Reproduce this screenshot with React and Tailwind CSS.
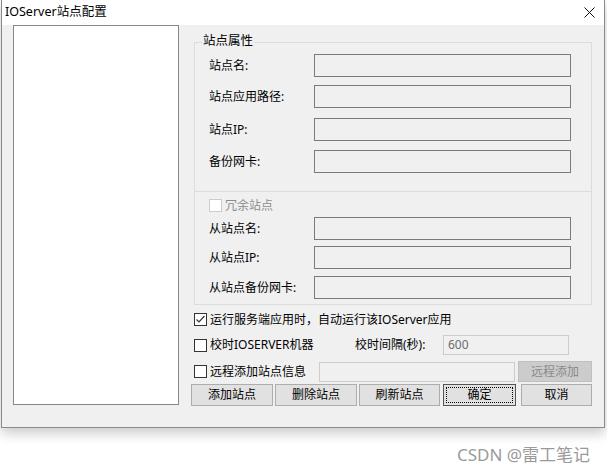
import React from "react";

const FONT = "font-['Noto_Sans','Noto_Sans_CJK_SC',sans-serif]";

function Input({ className = "" }) {
  return <div className={"h-[23px] border border-[#7a7a7a] bg-[#f0f0f0] " + className} />;
}

function Row({ label, className = "" }) {
  return (
    <div className={"flex items-center " + className}>
      <div className="w-[105px] leading-none">{label}</div>
      <Input className="w-[257px]" />
    </div>
  );
}

function Checkbox({ checked = false, disabled = false }) {
  return (
    <div
      className={
        "w-[13px] h-[13px] border bg-white flex items-center justify-center shrink-0 " +
        (disabled ? "border-[#cccccc]" : "border-[#333333]")
      }
    >
      {checked && (
        <svg width="11" height="11" viewBox="0 0 11 11">
          <polyline points="1.5,5.5 4,8 9.5,2" fill="none" stroke="#333" strokeWidth="1.2" />
        </svg>
      )}
    </div>
  );
}

function Btn({ children, className = "", focused = false }) {
  return (
    <div
      className={
        "h-[22px] bg-[#e1e1e1] border flex items-center justify-center relative " +
        (focused ? "border-[#555555] " : "border-[#adadad] ") +
        className
      }
    >
      {focused && <div className="absolute inset-[2px] border border-dotted border-black" />}
      <span className="leading-none">{children}</span>
    </div>
  );
}

export default function App() {
  return (
    <div className={"w-[607px] h-[473px] bg-white relative overflow-hidden text-[12px] text-black " + FONT}>
      <div className="ml-[1px] w-[604px] h-[428px] border-x border-b border-[#8a8a8a] flex flex-col shadow-[0_5px_12px_rgba(0,0,0,0.22)]">
        <div className="h-[25px] bg-white flex items-center justify-between pl-[3px] pr-[9px] shrink-0">
          <span className="text-[12.5px] leading-none">IOServer站点配置</span>
          <svg width="11" height="11" viewBox="0 0 11 11">
            <path d="M0.5 0.5 L10.5 10.5 M10.5 0.5 L0.5 10.5" stroke="#111" strokeWidth="1" />
          </svg>
        </div>
        <div className="flex-1 bg-[#f0f0f0] flex">
          <div className="ml-[11px] w-[166px] h-[380px] border border-[#828790] bg-white" />
          <div className="ml-[12px] w-[401px] flex flex-col">
            <div className="ml-[3px] mt-[17px] w-[398px] h-[263px] border border-[#dcdcdc] relative flex flex-col">
              <div className="absolute left-[7px] top-[-8px] bg-[#f0f0f0] px-[1px] leading-none text-[12.5px]">站点属性</div>
              <div className="pl-[14px] flex flex-col">
                <Row label="站点名:" className="mt-[11px]" />
                <Row label="站点应用路径:" className="mt-[8px]" />
                <Row label="站点IP:" className="mt-[10px]" />
                <Row label="备份网卡:" className="mt-[9px]" />
              </div>
              <div className="mt-[18px] border-t border-[#dcdcdc]" />
              <div className="pl-[14px] flex flex-col">
                <div className="mt-[6px] h-[15px] flex items-center gap-[3px] text-[#8d8d8d]">
                  <Checkbox disabled />
                  <span className="leading-none">冗余站点</span>
                </div>
                <Row label="从站点名:" className="mt-[4px]" />
                <Row label="从站点IP:" className="mt-[6px]" />
                <Row label="从站点备份网卡:" className="mt-[7px]" />
              </div>
            </div>
            <div className="ml-[3px] mt-[8px] h-[13px] flex items-center gap-[3px]">
              <Checkbox checked />
              <span className="leading-none">运行服务端应用时，自动运行该IOServer应用</span>
            </div>
            <div className="ml-[3px] mt-[9px] h-[20px] flex items-center">
              <Checkbox />
              <span className="ml-[3px] leading-none w-[145px]">校时IOSERVER机器</span>
              <span className="leading-none w-[88px]">校时间隔(秒):</span>
              <div className="w-[126px] h-[20px] border border-[#cccccc] bg-[#f0f0f0] flex items-center pl-[4px] text-[#6d6d6d] leading-none">600</div>
            </div>
            <div className="ml-[3px] mt-[6px] h-[21px] flex items-center">
              <Checkbox />
              <span className="ml-[3px] leading-none w-[109px]">远程添加站点信息</span>
              <div className="w-[197px] h-[20px] border border-[#cccccc] bg-[#f0f0f0]" />
              <div className="ml-[3px] w-[74px] h-[21px] bg-[#cccccc] border border-[#bfbfbf] flex items-center justify-center text-[#8a8a8a] leading-none">远程添加</div>
            </div>
            <div className="mt-[2px] flex">
              <Btn className="w-[82px]">添加站点</Btn>
              <Btn className="ml-[2px] w-[82px]">删除站点</Btn>
              <Btn className="ml-[2px] w-[81px]">刷新站点</Btn>
              <Btn className="ml-[3px] w-[73px]" focused>确定</Btn>
              <Btn className="ml-[5px] w-[71px]">取消</Btn>
            </div>
          </div>
        </div>
      </div>
      <div className="absolute left-[457px] top-[446px] text-[17px] leading-none text-[#9a9a9a]">CSDN @雷工笔记</div>
    </div>
  );
}
